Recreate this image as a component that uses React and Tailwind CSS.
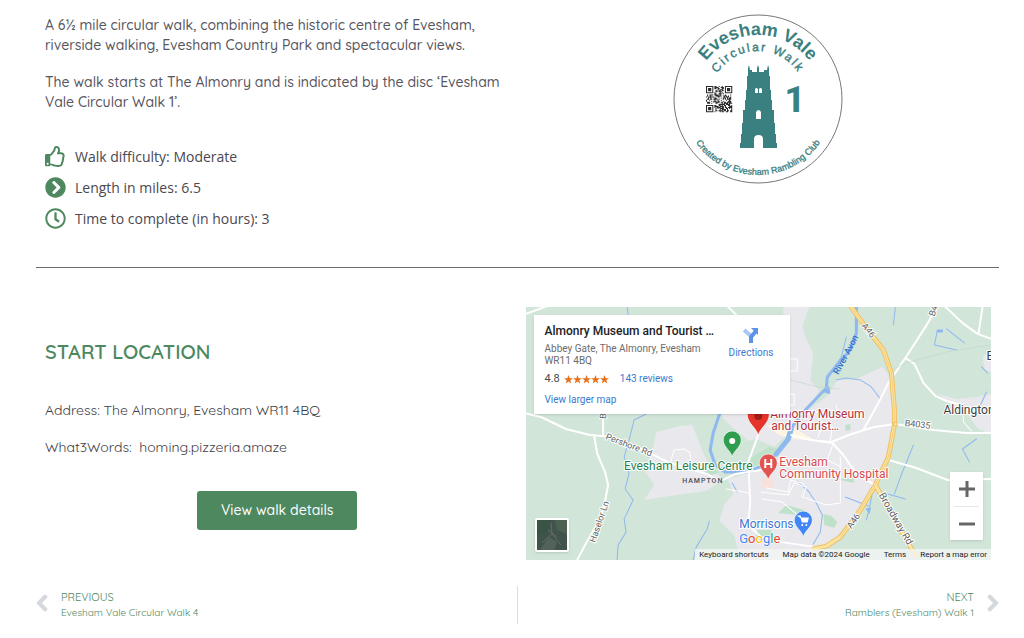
import { FaRegThumbsUp, FaChevronCircleRight, FaRegClock, FaChevronLeft, FaChevronRight } from "react-icons/fa";

const FACTS = [
  { icon: FaRegThumbsUp, text: "Walk difficulty: Moderate" },
  { icon: FaChevronCircleRight, text: "Length in miles: 6.5" },
  { icon: FaRegClock, text: "Time to complete (in hours): 3" },
];

const QR_SIZE = 25;

// Finder squares in three corners, scattered modules everywhere else
const isDark = (x, y) => {
  const corners = [[0, 0], [QR_SIZE - 7, 0], [0, QR_SIZE - 7]];
  for (const [cx, cy] of corners) {
    const dx = x - cx;
    const dy = y - cy;
    if (dx >= -1 && dx <= 7 && dy >= -1 && dy <= 7) {
      const ring = Math.max(Math.abs(dx - 3), Math.abs(dy - 3));
      return ring !== 2 && ring !== 4;
    }
  }
  return (x * 7 + y * 13 + x * y * 5 + ((x * x + y * 3) % 11)) % 9 < 5;
};

const QR_PATH = Array.from({ length: QR_SIZE * QR_SIZE }, (_, i) => [i % QR_SIZE, Math.floor(i / QR_SIZE)])
  .filter(([x, y]) => isDark(x, y))
  .map(([x, y]) => `M${x} ${y}h1v1h-1z`)
  .join("");

function WalkDisc() {
  return (
    <svg viewBox="0 0 170 170" className="w-[170px] h-[170px] font-['Liberation_Sans',sans-serif]" role="img" aria-label="Evesham Vale Circular Walk 1 disc">
      <defs>
        <path id="disc-outer" d="M21 85A64 64 0 0 1 149 85" />
        <path id="disc-inner" d="M37 85A48 48 0 0 1 133 85" />
        <path id="disc-lower" d="M9 85A76 76 0 0 0 161 85" />
      </defs>
      <circle cx="85" cy="85" r="84" fill="#fff" stroke="#777" />
      <g fill="#3b8080" textAnchor="middle">
        <text className="text-[18px] font-bold">
          <textPath href="#disc-outer" startOffset="50%">Evesham Vale</textPath>
        </text>
        <text className="text-[12px] tracking-[2px]" stroke="#3b8080" strokeWidth="0.4">
          <textPath href="#disc-inner" startOffset="50%">Circular Walk</textPath>
        </text>
        <text className="text-[9px]" stroke="#3b8080" strokeWidth="0.3">
          <textPath href="#disc-lower" startOffset="50%">Created by Evesham Rambling Club</textPath>
        </text>
        <text x="122" y="98" className="text-[36px] font-extrabold font-[Roboto,sans-serif]">1</text>
        <path d="M75 60V54L76 51L77 56H79V58H84V54L85 51L86 54V58H91V56H94L95 51L96 54V62H97V76H98V86H99V96H101V109H102V120H103V129H104V134H90V125Q90 121 85.500 121Q81 121 81 125V134H67V129H68V120H69V109H70V96H72V86H73V76H74V62H75Z" />
      </g>
      <path d="M82 79V75Q83.500 73 85 75V79ZM86 79V75Q87.500 73 89 75V79ZM83 105V98Q85.500 94 88 98V105Z" fill="#fff" />
      <path d={QR_PATH} transform="translate(33 72) scale(1.05)" fill="#2b2b2b" />
    </svg>
  );
}

function Pin({ x, y, color, r = 9, children }) {
  return (
    <g transform={`translate(${x} ${y})`}>
      <path
        transform={`scale(${r / 9})`}
        d="M0 16C-1 10-9 6-9-1A9 9 0 1 1 9-1C9 6 1 10 0 16Z"
        fill={color}
        stroke="#fff"
        strokeWidth="0.6"
      />
      {children}
    </g>
  );
}

function MapCanvas() {
  return (
    <svg viewBox="0 0 465 253" preserveAspectRatio="xMidYMid slice" className="block w-full h-full font-[Roboto,sans-serif]" role="img" aria-label="Map of Evesham">
      <rect width="465" height="253" fill="#d1e6d9" />

      {/* built-up areas */}
      <g fill="#e8e8ed">
        <path d="M130 125L154 119L166 118L170 128L178 148L186 163L197 172L180 184L150 188L118 193L128 178L118 163L126 146Z" />
        <path d="M257 0H283L276 20L280 32L287 46L284 73L293 84L279 105L300 90L311 73L330 72L356 60L366 73L368 118L362 150L349 178L334 203L321 220L301 241L285 253H214L208 228L193 214L198 198L207 187L202 172L222 166L200 140L196 107H257Z" />
        <path d="M465 87V127L452 122L440 106L428 100L412 87L430 92L450 90Z" />
        <path d="M456 50L465 44V66L458 62Z" />
      </g>
      <path d="M193 108L204 118L222 134L230 132L248 140L260 128L252 150L224 163L200 162L188 148L187 134Z" fill="#d1e6d9" />
      <g fill="#bfe0c9">
        <path d="M222 152L243 140L251 142L246 151L224 161Z" />
        <path d="M252 206L260 198L278 203L272 208Z" />
        <path d="M297 207L305 209L311 215L308 221L298 218Z" />
        <path d="M231 223H245L244 231H230Z" />
        <path d="M319 118L324 117L324 123L319 124Z" />
        <path d="M310 172L328 171L327 176Z" />
        <path d="M178 165L188 160L192 166L182 169Z" />
      </g>
      <path d="M236 172L246 170L249 180L236 182Z" fill="#f8e1dd" />
      <path d="M240 118L266 120L290 134L268 132L252 128Z" fill="#fdf5e2" />

      {/* water */}
      <g fill="none" stroke="#8fb8ef" strokeLinecap="round" strokeLinejoin="round">
        <path d="M330 0V26L324 43L309 60L301 70L300 81L279 103L264 122L260 134L251 146L238 158L221 165H199L189 158L184 143L187 126L193 108L200 90" strokeWidth="3" />
        <path d="M265 122L262 132L250 147" strokeWidth="5" />
        <path d="M297 84L302 80L303 86Z" fill="#8fb8ef" strokeWidth="2" />
        <path d="M101 0L104 20M120 107L108 113L103 133L98 150L103 166L99 182L107 193L98 212L100 225L92 238L91 253" strokeWidth="1" />
        <path d="M183 214L181 222L170 240L167 253M206 176L211 185M310 73L320 71L334 73L345 80L354 92M320 30L315 50L308 60M369 0L367 18M411 23L408 38L430 43M420 22L438 36M387 138L374 170L368 187M358 186L379 192M319 190L342 199M346 186L343 201L340 213M271 174L282 184L290 196L296 208L294 225L287 237M450 132L436 142L443 155M455 60L461 66M453 100L460 85" strokeWidth="1" />
        <path d="M411 23H416V25H411ZM340 202L344 201L343 206Z" fill="#8fb8ef" strokeWidth="1" />
      </g>

      {/* minor roads */}
      <g fill="none" stroke="#fff" strokeLinejoin="round" strokeLinecap="round">
        <path d="M-2 106L15 110L40 122L64 128L86 130L124 146L144 156L181 167L194 174L209 167L240 162L260 150" strokeWidth="2" />
        <path d="M77 128V100L72 60M68 128L71 146L79 165L82 178L79 194L74 212L60 236L50 255M0 7L30-4M200-2L210 8" strokeWidth="2" />
        <path d="M411 0L399 20L379 51L362 76L352 96L337 123" strokeWidth="2" />
        <path d="M232 128L222 155L223 175L224 195L222 218L235 230L255 235L290 240" strokeWidth="2" />
        <path d="M369 117L407 123L440 126H465M369 117L348 120L325 127L305 135L284 133L265 128M265 128L284 133L306 136L317 148L331 168L349 178" strokeWidth="2" />
        <path d="M419 0L436 16L451 27L465 32M456 0L452 27M379 51L388 57L397 76L409 89L420 94L436 98M362 153L390 161L421 173L465 172" strokeWidth="2" />
        <path d="M144 156L148 143L158 142L164 146L165 158M235 185L262 188L268 176L280 180L276 190L300 198L314 196V150M236 192L256 195L274 210M240 181L262 185L264 173L278 177M306 139L301 153L315 160M292 130L296 115L306 120L304 134M264 52H271V64H264M264 87H268V98H262M200 182L223 186M250 112L262 110L290 105L312 110L310 98M436 98L437 115L445 124" strokeWidth="1" />
      </g>
      <path d="M264 73L292 80L314 82M368 62L380 56L420 45L465 38" fill="none" stroke="#c3d3cb" strokeWidth="0.6" />

      {/* main roads */}
      <g fill="none" strokeLinejoin="round">
        <g stroke="#efc064" strokeWidth="5">
          <path d="M322-4L339 20L357 43L365 66L368 103V118L362 150L349 178L334 203L314 230L300 239L286 242" />
          <path d="M349 178L367 210L390 250" />
        </g>
        <g stroke="#fbe3a0" strokeWidth="3">
          <path d="M322-4L339 20L357 43L365 66L368 103V118L362 150L349 178L334 203L314 230L300 239L286 242" />
          <path d="M349 178L367 210L390 250" />
        </g>
        <path d="M322-4L339 20L357 43L365 66L368 103V118L362 150L349 178L334 203L314 230" stroke="#efc064" strokeWidth="0.6" />
      </g>
      <circle cx="369" cy="117" r="2" fill="#fbe3a0" stroke="#efc064" />

      {/* road and place names */}
      <g className="text-[9px]" fill="#5b5f63" stroke="#fff" strokeWidth="2" strokeLinejoin="round" paintOrder="stroke">
        <text transform="translate(79 132) rotate(21)">Pershore Rd</text>
        <text transform="translate(69 236) rotate(-71)">Haselor Ln</text>
        <text transform="translate(80 112) rotate(-88)">B4</text>
        <text transform="translate(335 19) rotate(52)">A46</text>
        <text transform="translate(325 222) rotate(-55)">A46</text>
        <text transform="translate(408 10) rotate(-72)">B4</text>
        <text transform="translate(378 119) rotate(6)">B4035</text>
        <text transform="translate(352 188) rotate(60)" className="text-[10px]">Broadway Rd</text>
      </g>
      <text transform="translate(312 68) rotate(-62)" className="text-[9px] font-medium" fill="#2f6fd0">River Avon</text>
      <text x="156" y="176" className="text-[7px] font-medium tracking-[1px]" fill="#4a4d50">HAMPTON</text>
      <g className="text-[12px]" stroke="#fff" strokeWidth="2" strokeLinejoin="round" paintOrder="stroke">
        <text x="417" y="107" fill="#3c4043">Aldington</text>
        <text x="460" y="53" fill="#3c4043">E</text>
        <text x="244" y="111" fill="#b3313a">Almonry Museum</text>
        <text x="245" y="123" fill="#b3313a">and Tourist…</text>
        <text x="98" y="163" fill="#23824a">Evesham Leisure Centre</text>
        <text x="253" y="159" fill="#d44a4c">Evesham</text>
        <text x="253" y="171" fill="#d44a4c">Community Hospital</text>
        <text x="213" y="221" fill="#3f78cf">Morrisons</text>
      </g>

      <Pin x={232} y={109} r={11} color="#e5352b">
        <circle r="4" fill="#a51d17" />
      </Pin>
      <Pin x={206} y={134} color="#2f9f4f">
        <circle r="3" fill="#fff" />
      </Pin>
      <Pin x={242} y={157} color="#e35450">
        <path d="M-3-5V4M3-5V4M-3 0H3" stroke="#fff" strokeWidth="2" />
      </Pin>
      <Pin x={277} y={214} color="#4285f4">
        <path d="M-5-5H-3L-1 1H4L5-3H-2Z" fill="#fff" stroke="#fff" />
        <circle cx="-1" cy="4" r="1" fill="#fff" />
        <circle cx="3" cy="4" r="1" fill="#fff" />
      </Pin>

      <text x="213" y="236" className="text-[13px]" stroke="#fff" strokeWidth="1" paintOrder="stroke">
        <tspan fill="#4285f4">G</tspan>
        <tspan fill="#ea4335">o</tspan>
        <tspan fill="#fbbc05">o</tspan>
        <tspan fill="#4285f4">g</tspan>
        <tspan fill="#34a853">l</tspan>
        <tspan fill="#ea4335">e</tspan>
      </text>
    </svg>
  );
}

function Star() {
  return (
    <svg viewBox="0 0 20 20" className="size-[9px]" aria-hidden="true">
      <path d="M10 0L12.600 7H20L14 11.500L16.200 19L10 14.600L3.800 19L6 11.500L0 7H7.400Z" fill="currentColor" />
    </svg>
  );
}

function PlaceCard() {
  return (
    <div className="absolute top-2 left-2 w-64 h-[99px] bg-white shadow-sm pl-[11px] pr-4 pt-2 flex justify-between text-[10px]">
      <div className="w-[168px]">
        <h3 className="text-[12px] leading-4 font-medium text-[#202124] whitespace-nowrap">Almonry Museum and Tourist …</h3>
        <p className="mt-1 leading-3 text-[#6b6b6b]">Abbey Gate, The Almonry, Evesham WR11 4BQ</p>
        <div className="mt-1 flex items-center leading-4">
          <span className="text-[11px] text-[#4a4a4a]">4.8</span>
          <span className="ml-1 flex text-[#e7711b]">
            {[1, 2, 3, 4, 5].map((n) => <Star key={n} />)}
          </span>
          <a href="#reviews" className="ml-[11px] text-[#3a7bd0]">143 reviews</a>
        </div>
        <a href="#map" className="mt-[5px] block leading-4 text-[#3a7bd0]">View larger map</a>
      </div>
      <a href="#directions" className="flex flex-col items-center pt-1 h-12 text-[#3a7bd0]">
        <svg viewBox="0 0 16 16" className="w-4 h-4">
          <path d="M1 3L8 9V16" fill="none" stroke="#a9c7f5" strokeWidth="4" />
          <path d="M8 16V10L13 4" fill="none" stroke="#5b93e8" strokeWidth="4" />
          <path d="M8 1H15V8Z" fill="#5b93e8" />
        </svg>
        <span className="mt-1 leading-3">Directions</span>
      </a>
    </div>
  );
}

function LocationMap() {
  return (
    <div className="relative h-[253px] overflow-hidden font-[Roboto,sans-serif]">
      <MapCanvas />
      <PlaceCard />
      <button type="button" aria-label="Show satellite imagery" className="absolute left-[9px] bottom-2 size-[34px] border-2 border-white rounded-xs shadow overflow-hidden bg-[#41544c]">
        <svg viewBox="0 0 30 30" className="block w-full h-full">
          <path d="M0 0H13L10 12L0 15Z" fill="#385443" />
          <path d="M18 0H30V14L20 10Z" fill="#4c6152" />
          <path d="M3 30L12 17L20 22L17 30Z" fill="#53635c" />
          <path d="M14 3L15 14L24 25M15 14L5 23M11 10L20 17" stroke="#5f6d68" fill="none" />
        </svg>
      </button>
      <div className="absolute right-2 bottom-5 w-[33px] bg-white shadow flex flex-col items-center">
        <button type="button" aria-label="Zoom in" className="h-[34px] w-full flex items-center justify-center">
          <svg viewBox="0 0 16 16" className="size-4"><path d="M8 0V16M0 8H16" stroke="#666" strokeWidth="3" /></svg>
        </button>
        <span className="h-px w-[25px] bg-[#e6e6e6]" />
        <button type="button" aria-label="Zoom out" className="h-[33px] w-full flex items-center justify-center">
          <svg viewBox="0 0 16 16" className="size-4"><path d="M0 8H16" stroke="#666" strokeWidth="3" /></svg>
        </button>
      </div>
      <div className="absolute right-0 bottom-0 h-[11px] bg-[#f3f5f4]/80 pl-1 pr-1 flex items-center gap-[14px] text-[8px] leading-[11px] text-[#222] whitespace-nowrap">
        <button type="button">Keyboard shortcuts</button>
        <span>Map data ©2024 Google</span>
        <a href="#terms">Terms</a>
        <a href="#report">Report a map error</a>
      </div>
    </div>
  );
}

export default function App() {
  return (
    <main className="pl-9 pr-[25px] bg-white font-[Quicksand,Lato,sans-serif] text-[#57555e]">
      <section className="grid grid-cols-2">
        <div className="pl-[9px] pr-2 pt-[15px]">
          <div className="space-y-[17px] text-[14px] leading-5 font-medium">
            <p>A 6½ mile circular walk, combining the historic centre of Evesham, riverside walking, Evesham Country Park and spectacular views.</p>
            <p>The walk starts at The Almonry and is indicated by the disc ‘Evesham Vale Circular Walk 1’.</p>
          </div>
          <ul className="mt-[29px] font-['Open_Sans',sans-serif] text-[14px] font-medium text-[#4a4851]">
            {FACTS.map(({ icon: Icon, text }) => (
              <li key={text} className="h-[31px] flex items-center gap-[9px]">
                <Icon size={21} className="text-[#4e885f]" />
                {text}
              </li>
            ))}
          </ul>
        </div>
        <div className="pt-[14px] flex justify-center">
          <WalkDisc />
        </div>
      </section>

      <hr className="mt-[33px] border-[#6b6b6b]" />

      <section className="mt-[39px] grid grid-cols-2">
        <div className="pl-[9px] pr-2 pt-8">
          <h2 className="text-[20px] leading-[26px] font-semibold text-[#4e885f]">START LOCATION</h2>
          <p className="mt-[35px] text-[14px] leading-5 text-[#3f3d46]">Address: The Almonry, Evesham WR11 4BQ</p>
          <p className="mt-[17px] text-[14px] leading-5 text-[#3f3d46]">What3Words:&nbsp; homing.pizzeria.amaze</p>
          <div className="mt-[34px] flex justify-center">
            <a href="#details" className="w-40 h-[39px] flex items-center justify-center rounded-[3px] bg-[#4e885f] text-white text-[14px] font-medium">View walk details</a>
          </div>
        </div>
        <div className="px-2">
          <LocationMap />
        </div>
      </section>

      <nav className="mt-[26px] grid grid-cols-2 text-[#4e885f]">
        <a href="#previous" className="h-[38px] flex items-center gap-[13px] border-r border-[#dcdcdc]">
          <FaChevronLeft size={18} stroke="currentColor" strokeWidth={40} className="w-3 mb-1 text-[#d5d8dc]" />
          <span className="flex flex-col">
            <span className="text-[11px] leading-4">PREVIOUS</span>
            <span className="text-[10px] leading-4">Evesham Vale Circular Walk 4</span>
          </span>
        </a>
        <a href="#next" className="h-[38px] flex items-center justify-end gap-[13px] text-right">
          <span className="flex flex-col">
            <span className="text-[11px] leading-4">NEXT</span>
            <span className="text-[10px] leading-4">Ramblers (Evesham) Walk 1</span>
          </span>
          <FaChevronRight size={18} stroke="currentColor" strokeWidth={40} className="w-3 mb-1 text-[#d5d8dc]" />
        </a>
      </nav>
    </main>
  );
}
